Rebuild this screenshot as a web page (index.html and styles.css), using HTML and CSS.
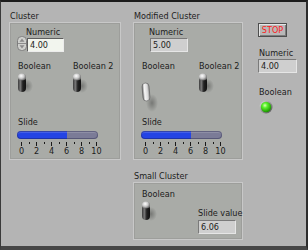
FILE: index.html
```html
<!DOCTYPE html>
<html lang="en">
<head>
    <meta charset="UTF-8">
    <title>Cluster front panel</title>
    <link rel="stylesheet" href="styles.css">
</head>
<body>
    <svg class="defs" width="0" height="0">
        <defs>
            <linearGradient id="leverDark" x1="0" y1="0" x2="1" y2="0">
                <stop offset="0" stop-color="#3c3c3c"/>
                <stop offset="0.3" stop-color="#777"/>
                <stop offset="0.6" stop-color="#222"/>
                <stop offset="1" stop-color="#111"/>
            </linearGradient>
            <linearGradient id="leverLight" x1="0" y1="0" x2="1" y2="0">
                <stop offset="0" stop-color="#6a6a6a"/>
                <stop offset="0.3" stop-color="#f6f6f6"/>
                <stop offset="0.7" stop-color="#dadada"/>
                <stop offset="1" stop-color="#8a8a8a"/>
            </linearGradient>
            <radialGradient id="knob" cx="0.4" cy="0.35" r="0.7">
                <stop offset="0" stop-color="#fff"/>
                <stop offset="0.5" stop-color="#c8c8c8"/>
                <stop offset="1" stop-color="#555"/>
            </radialGradient>
            <radialGradient id="shadow" cx="0.5" cy="0.5" r="0.5">
                <stop offset="0" stop-color="#000" stop-opacity="0.3"/>
                <stop offset="1" stop-color="#000" stop-opacity="0"/>
            </radialGradient>
            <radialGradient id="ledGreen" cx="0.4" cy="0.35" r="0.65">
                <stop offset="0" stop-color="#dcffb8"/>
                <stop offset="0.35" stop-color="#5cf22c"/>
                <stop offset="1" stop-color="#1c9600"/>
            </radialGradient>
            <linearGradient id="ledRing" x1="0" y1="0" x2="1" y2="1">
                <stop offset="0" stop-color="#e0e0e0"/>
                <stop offset="1" stop-color="#4a4a4a"/>
            </linearGradient>
            <symbol id="toggleUp" viewBox="0 0 16 22">
                <ellipse cx="10" cy="14" rx="6" ry="7" fill="url(#shadow)"/>
                <rect x="1" y="5" width="8" height="15" rx="4" fill="url(#leverDark)"/>
                <ellipse cx="5" cy="5" rx="4" ry="3.6" fill="url(#knob)"/>
            </symbol>
        </defs>
    </svg>

    <div class="panel">
        <div class="col col-left">
            <div class="cluster-label">Cluster</div>
            <div class="cluster big">
                <div class="numeric">
                    <div class="label">Numeric</div>
                    <div class="num-row">
                        <svg class="arrows" width="10" height="15" viewBox="0 0 10 15">
                            <rect x="0.5" y="0.5" width="9" height="14" rx="4" fill="#cfd0cd" stroke="#7e7e7e"/>
                            <line x1="1" y1="7.5" x2="9" y2="7.5" stroke="#8c8c8c"/>
                            <polygon points="5,2.5 7.5,5.8 2.5,5.8" fill="#8a8a8a"/>
                            <polygon points="2.5,9.2 7.5,9.2 5,12.5" fill="#8a8a8a"/>
                        </svg>
                        <div class="textbox control">4.00</div>
                    </div>
                </div>
                <div class="bools">
                    <div class="bool">
                        <div class="label">Boolean</div>
                        <svg class="toggle" width="16" height="22"><use href="#toggleUp"/></svg>
                    </div>
                    <div class="bool">
                        <div class="label">Boolean 2</div>
                        <svg class="toggle" width="16" height="22"><use href="#toggleUp"/></svg>
                    </div>
                </div>
                <div class="slide">
                    <div class="label">Slide</div>
                    <div class="bar"></div>
                    <div class="ticks">
                        <span class="major"></span><span></span><span class="major"></span><span></span>
                        <span class="major"></span><span></span><span class="major"></span><span></span>
                        <span class="major"></span><span></span><span class="major"></span>
                    </div>
                    <div class="nums">
                        <span>0</span><span>2</span><span>4</span><span>6</span><span>8</span><span>10</span>
                    </div>
                </div>
            </div>
        </div>

        <div class="col col-mid">
            <div class="cluster-label">Modified Cluster</div>
            <div class="cluster big">
                <div class="numeric ind">
                    <div class="label">Numeric</div>
                    <div class="num-row">
                        <div class="textbox indicator">5.00</div>
                    </div>
                </div>
                <div class="bools">
                    <div class="bool">
                        <div class="label">Boolean</div>
                        <svg class="toggle down" width="18" height="30" viewBox="0 0 18 30">
                            <ellipse cx="11" cy="21" rx="6" ry="9" fill="url(#shadow)"/>
                            <g transform="rotate(-5 5 10)">
                                <rect x="1.5" y="1" width="7" height="18" rx="3.5" fill="url(#leverLight)" stroke="#5a5a5a" stroke-width="0.6"/>
                            </g>
                        </svg>
                    </div>
                    <div class="bool">
                        <div class="label">Boolean 2</div>
                        <svg class="toggle" width="16" height="22"><use href="#toggleUp"/></svg>
                    </div>
                </div>
                <div class="slide">
                    <div class="label">Slide</div>
                    <div class="bar"></div>
                    <div class="ticks">
                        <span class="major"></span><span></span><span class="major"></span><span></span>
                        <span class="major"></span><span></span><span class="major"></span><span></span>
                        <span class="major"></span><span></span><span class="major"></span>
                    </div>
                    <div class="nums">
                        <span>0</span><span>2</span><span>4</span><span>6</span><span>8</span><span>10</span>
                    </div>
                </div>
            </div>

            <div class="cluster-label small-label">Small Cluster</div>
            <div class="cluster small">
                <div class="bool">
                    <div class="label">Boolean</div>
                    <svg class="toggle" width="16" height="22"><use href="#toggleUp"/></svg>
                </div>
                <div class="slide-value">
                    <div class="label">Slide value</div>
                    <div class="textbox indicator">6.06</div>
                </div>
            </div>
        </div>

        <div class="col col-right">
            <div class="stop">STOP</div>
            <div class="label side-label">Numeric</div>
            <div class="textbox indicator wide">4.00</div>
            <div class="label side-label led-label">Boolean</div>
            <svg class="led" width="14" height="14" viewBox="0 0 14 14">
                <circle cx="7" cy="7" r="6.5" fill="url(#ledRing)"/>
                <circle cx="7" cy="7" r="5.2" fill="url(#ledGreen)"/>
            </svg>
        </div>
    </div>
</body>
</html>
```

FILE: styles.css
```css
:root {
    --panel-color: #b4b4b4;
    --cluster-color: #a9aba7;
    --control-color: #f2f5ee;
    --indicator-color: #cfcfcf;
    --slide-blue: #2444e4;
    --slide-rest: #7b7b97;
}

* {
    margin: 0;
    padding: 0;
    box-sizing: border-box;
}

body {
    font-family: "DejaVu Sans Condensed", "Liberation Sans", sans-serif;
    font-size: 9px;
    line-height: 12px;
    color: #1c1c1c;
    background: var(--panel-color);
}

.defs {
    display: block;
    width: 0;
    height: 0;
}

.panel {
    width: 308px;
    height: 250px;
    display: flex;
    padding: 8px 0 0 8px;
    background: var(--panel-color);
    border-style: solid;
    border-width: 2px 2px 4px 1px;
    border-color: #1c1c1c #2c2c2c #464646 #3a3a3a;
}

.col-left {
    width: 112px;
}

.col-mid {
    width: 110px;
    margin-left: 12px;
}

.col-right {
    margin-left: 15px;
}

.label {
    height: 12px;
    white-space: nowrap;
}

.cluster-label {
    height: 12px;
    padding-left: 1px;
    white-space: nowrap;
}

.small-label {
    margin-top: 10px;
}

.cluster {
    border: 1px solid #c8c8c8;
    box-shadow: inset 0 0 0 1px #9d9e9b;
    background: var(--cluster-color);
}

.cluster.big {
    height: 138px;
    padding-top: 3px;
}

/* numeric control and indicator */
.numeric {
    margin-left: 7px;
}

.numeric .label {
    margin-left: 9px;
}

.numeric.ind {
    margin-left: 15px;
}

.numeric.ind .label {
    margin-left: 0;
}

.numeric.ind .textbox {
    margin-left: 1px;
}

.num-row {
    display: flex;
    align-items: flex-start;
    margin-top: -2px;
}

.arrows {
    display: block;
}

.textbox {
    width: 37px;
    height: 14px;
    padding-left: 2px;
    margin-top: 2px;
    line-height: 12px;
    border: 1px solid;
    border-color: #5e5e5e #ececec #ececec #5e5e5e;
}

.textbox.control {
    background: var(--control-color);
}

.textbox.indicator {
    width: 38px;
    background: var(--indicator-color);
    border-color: #7a7a7a #e6e6e6 #e6e6e6 #7a7a7a;
}

.textbox.wide {
    width: 39px;
    margin-top: 0;
}

/* booleans */
.bools {
    display: grid;
    grid-template-columns: 55px auto;
    height: 34px;
    margin-top: 8px;
    padding-left: 8px;
}

.col-mid .bools {
    grid-template-columns: 57px auto;
}

.toggle {
    display: block;
    margin-left: -1px;
}

.toggle.down {
    margin-top: 10px;
}

/* slide */
.slide {
    margin-top: 22px;
    margin-left: 7px;
}

.slide .label {
    margin-left: 1px;
}

.bar {
    width: 81px;
    height: 8px;
    margin-top: 3px;
    border-radius: 4px;
    background: linear-gradient(to right, var(--slide-blue) 0 62%, var(--slide-rest) 62%);
    box-shadow: inset 0 0 0 1px rgba(20, 20, 60, 0.35), inset 0 2px 0 rgba(255, 255, 255, 0.15);
}

.ticks {
    display: flex;
    justify-content: space-between;
    align-items: flex-start;
    width: 76px;
    height: 4px;
    margin-top: 3px;
    margin-left: 4px;
}

.ticks span {
    width: 1px;
    height: 2px;
    background: #1a1a1a;
}

.ticks span.major {
    height: 4px;
}

.nums {
    display: flex;
    justify-content: space-between;
    width: 76px;
    margin-left: 4px;
    line-height: 10px;
}

.nums span {
    width: 1px;
    display: flex;
    justify-content: center;
}

/* small cluster */
.cluster.small {
    height: 58px;
    display: grid;
    grid-template-columns: 56px auto;
    padding: 5px 0 0 8px;
}

.slide-value {
    padding-top: 19px;
}

.slide-value .textbox {
    margin-top: 1px;
}

/* right column */
.stop {
    width: 29px;
    height: 14px;
    margin-top: 13px;
    line-height: 12px;
    text-align: center;
    color: #ff1a1a;
    background: #b8b8b8;
    border: 1px solid #4e4e4e;
    box-shadow: inset 1px 1px 0 #e6e6e6, inset -1px -1px 0 #7c7c7c;
}

.side-label {
    margin-top: 10px;
    margin-left: 1px;
}

.led-label {
    margin-top: 13px;
}

.led {
    display: block;
    margin-top: 2px;
    margin-left: 1px;
}
```
